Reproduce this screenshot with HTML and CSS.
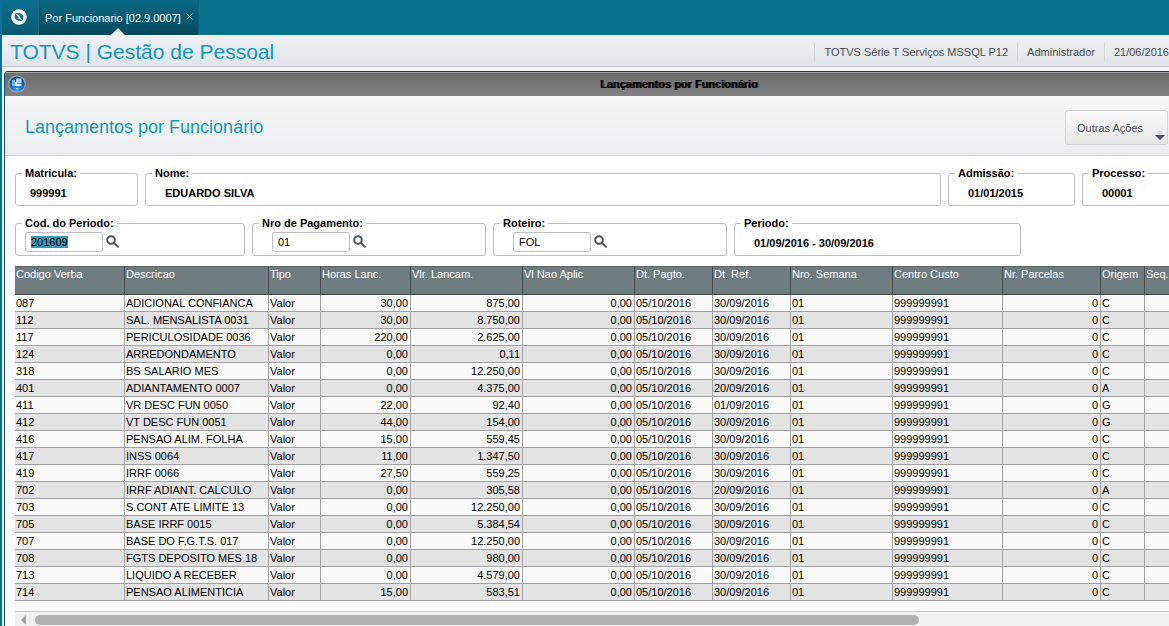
FILE: index.html
```html
<!DOCTYPE html>
<html lang="pt-BR">
<head>
    <meta charset="UTF-8">
    <meta name="viewport" content="width=device-width, initial-scale=1.0">
    <title>Lançamentos por Funcionário</title>
    <link rel="stylesheet" href="styles.css">
</head>

<body>

<nav class="tab-bar">
    <button class="home-button" aria-label="Início">
        <svg width="16" height="16" viewBox="0 0 16 16">
            <circle cx="8" cy="8" r="7.8" fill="#fff"/>
            <path d="M4 4.6 L8.6 4 L12.4 6.8 L12 11.4 L7.4 12 L3.6 9.2 Z" fill="#0a6c87"/>
            <path d="M4 4.6 L8.6 6.4 L8.9 8.6 L12 11.4 L7.4 9.6 L7.1 7.4 Z" fill="#fff"/>
        </svg>
    </button>
    <div class="tab">
        <span>Por Funcionario [02.9.0007]</span>
        <button class="tab-close" aria-label="Fechar">
            <svg width="7" height="7" viewBox="0 0 7 7"><path d="M.5 .5 L6.5 6.5 M6.5 .5 L.5 6.5" stroke="#a5c3cc" fill="none"/></svg>
        </button>
    </div>
</nav>

<header class="app-header">
    <h1>TOTVS | Gestão de Pessoal</h1>
    <ul class="session-info">
        <li>TOTVS Série T Serviços MSSQL P12</li>
        <li>Administrador</li>
        <li>21/06/2016</li>
    </ul>
</header>

<main class="window">
    <div class="window-title">
        <svg class="window-icon" width="18" height="18" viewBox="0 0 18 18">
            <defs>
                <radialGradient id="ball" cx="50%" cy="85%" r="80%">
                    <stop offset="0" stop-color="#3fa9ee"/>
                    <stop offset=".5" stop-color="#1769b8"/>
                    <stop offset="1" stop-color="#0d4f9c"/>
                </radialGradient>
            </defs>
            <circle cx="9" cy="9" r="8.8" fill="#9aa4ad"/>
            <circle cx="9" cy="9" r="7.6" fill="url(#ball)"/>
            <path d="M4 5h3v6H4z" fill="#6fb4ec"/>
            <path d="M8 3.5h5.5v5H8z" fill="#a9d5f6"/>
            <path d="M7 7h2v2h4.5v2H7z" fill="#e6f3fc"/>
            <path d="M7.5 13h3l-1.5 1.5z" fill="#9adcff"/>
        </svg>
        <span>Lançamentos por Funcionário</span>
    </div>

    <div class="page-header">
        <h2>Lançamentos por Funcionário</h2>
        <button class="actions-button">Outras Ações</button>
    </div>

    <form class="filters">
        <div class="field-row">
            <fieldset class="box box-matricula">
                <legend>Matricula:</legend>
                <div class="box-body">999991</div>
            </fieldset>
            <fieldset class="box box-nome">
                <legend>Nome:</legend>
                <div class="box-body">EDUARDO SILVA</div>
            </fieldset>
            <fieldset class="box box-admissao">
                <legend>Admissão:</legend>
                <div class="box-body">01/01/2015</div>
            </fieldset>
            <fieldset class="box box-processo">
                <legend>Processo:</legend>
                <div class="box-body">00001</div>
            </fieldset>
        </div>
        <div class="field-row">
            <fieldset class="box box-search box-periodo">
                <legend><label for="periodo">Cod. do Periodo:</label></legend>
                <div class="box-body">
                    <input id="periodo" type="text" value="201609">
                    <button type="button" class="search-button" aria-label="Pesquisar período">
                        <svg width="14" height="14" viewBox="0 0 14 14"><circle cx="5" cy="5" r="3.8"/><path d="M7.8 7.8 L12.6 12.4"/></svg>
                    </button>
                </div>
            </fieldset>
            <fieldset class="box box-search">
                <legend><label for="pagamento">Nro de Pagamento:</label></legend>
                <div class="box-body">
                    <input id="pagamento" type="text" value="01">
                    <button type="button" class="search-button" aria-label="Pesquisar pagamento">
                        <svg width="14" height="14" viewBox="0 0 14 14"><circle cx="5" cy="5" r="3.8"/><path d="M7.8 7.8 L12.6 12.4"/></svg>
                    </button>
                </div>
            </fieldset>
            <fieldset class="box box-search">
                <legend><label for="roteiro">Roteiro:</label></legend>
                <div class="box-body">
                    <input id="roteiro" type="text" value="FOL">
                    <button type="button" class="search-button" aria-label="Pesquisar roteiro">
                        <svg width="14" height="14" viewBox="0 0 14 14"><circle cx="5" cy="5" r="3.8"/><path d="M7.8 7.8 L12.6 12.4"/></svg>
                    </button>
                </div>
            </fieldset>
            <fieldset class="box box-datas">
                <legend>Periodo:</legend>
                <div class="box-body">01/09/2016 - 30/09/2016</div>
            </fieldset>
        </div>
    </form>

    <div class="grid">
        <table>
            <colgroup>
                <col class="col-codigo">
                <col class="col-descricao">
                <col class="col-tipo">
                <col class="col-horas">
                <col class="col-valor">
                <col class="col-valor">
                <col class="col-data">
                <col class="col-data">
                <col class="col-semana">
                <col class="col-centro">
                <col class="col-parcelas">
                <col class="col-origem">
                <col>
            </colgroup>
            <thead>
                <tr>
                    <th>Codigo Verba</th>
                    <th>Descricao</th>
                    <th>Tipo</th>
                    <th>Horas Lanc.</th>
                    <th>Vlr. Lancam.</th>
                    <th>Vl Nao Aplic</th>
                    <th>Dt. Pagto.</th>
                    <th>Dt. Ref.</th>
                    <th>Nro. Semana</th>
                    <th>Centro Custo</th>
                    <th>Nr. Parcelas</th>
                    <th>Origem</th>
                    <th>Seq.</th>
                </tr>
            </thead>
            <tbody id="entries"></tbody>
        </table>
    </div>

    <div class="scrollbar">
        <span class="scroll-arrow"></span>
        <span class="scroll-thumb"></span>
    </div>
</main>

<script>
    // codigo, descricao, horas, valor, data de referencia, origem
    const entries = [
        ["087", "ADICIONAL CONFIANCA", "30,00", "875,00", "30/09/2016", "C"],
        ["112", "SAL. MENSALISTA 0031", "30,00", "8.750,00", "30/09/2016", "C"],
        ["117", "PERICULOSIDADE 0036", "220,00", "2.625,00", "30/09/2016", "C"],
        ["124", "ARREDONDAMENTO", "0,00", "0,11", "30/09/2016", "C"],
        ["318", "BS SALARIO MES", "0,00", "12.250,00", "30/09/2016", "C"],
        ["401", "ADIANTAMENTO 0007", "0,00", "4.375,00", "20/09/2016", "A"],
        ["411", "VR DESC FUN 0050", "22,00", "92,40", "01/09/2016", "G"],
        ["412", "VT DESC FUN 0051", "44,00", "154,00", "30/09/2016", "G"],
        ["416", "PENSAO ALIM. FOLHA", "15,00", "559,45", "30/09/2016", "C"],
        ["417", "INSS 0064", "11,00", "1.347,50", "30/09/2016", "C"],
        ["419", "IRRF 0066", "27,50", "559,25", "30/09/2016", "C"],
        ["702", "IRRF ADIANT. CALCULO", "0,00", "305,58", "20/09/2016", "A"],
        ["703", "S.CONT ATE LIMITE 13", "0,00", "12.250,00", "30/09/2016", "C"],
        ["705", "BASE IRRF 0015", "0,00", "5.384,54", "30/09/2016", "C"],
        ["707", "BASE DO F.G.T.S. 017", "0,00", "12.250,00", "30/09/2016", "C"],
        ["708", "FGTS DEPOSITO MES 18", "0,00", "980,00", "30/09/2016", "C"],
        ["713", "LIQUIDO A RECEBER", "0,00", "4.579,00", "30/09/2016", "C"],
        ["714", "PENSAO ALIMENTICIA", "15,00", "583,51", "30/09/2016", "C"]
    ];

    document.getElementById("entries").innerHTML = entries.map(([codigo, descricao, horas, valor, ref, origem]) => `
        <tr>
            <td>${codigo}</td>
            <td>${descricao}</td>
            <td>Valor</td>
            <td class="number">${horas}</td>
            <td class="number">${valor}</td>
            <td class="number">0,00</td>
            <td>05/10/2016</td>
            <td>${ref}</td>
            <td>01</td>
            <td>999999991</td>
            <td class="number">0</td>
            <td>${origem}</td>
            <td></td>
        </tr>`).join("");

    const periodo = document.getElementById("periodo");
    periodo.focus();
    periodo.select();
</script>

</body>
</html>
```
FILE: styles.css
```css
* {
    box-sizing: border-box;
}

body {
    margin: 0;
    height: 100vh;
    overflow: hidden;
    display: flex;
    flex-direction: column;
    border-left: 2px solid #0a718e;
    background-color: #f4f5f7;
    font-family: "Liberation Sans", Arial, sans-serif;
    font-size: 11px;
    color: #000;
}

button {
    font-family: inherit;
    font-size: inherit;
    cursor: pointer;
}

/* Top tabs */
.tab-bar {
    flex: none;
    display: flex;
    height: 35px;
    background-color: #0a718e;
}

.home-button {
    width: 37px;
    padding: 0 2px 1px 0;
    border: none;
    border-right: 1px solid #2a6877;
    background: linear-gradient(#0a718e, #075b73);
    display: flex;
    align-items: center;
    justify-content: center;
}

.tab {
    position: relative;
    display: flex;
    align-items: center;
    gap: 5px;
    padding: 0 5px 0 6px;
    background: linear-gradient(#096a85, #06495b);
    border-right: 1px solid #0a6680;
    color: white;
}

.tab::after {
    content: "";
    position: absolute;
    bottom: 0;
    left: 50%;
    margin-left: -7px;
    border: 7px solid transparent;
    border-top: none;
    border-bottom-color: #eef0f4;
}

.tab-close {
    display: flex;
    padding: 0 0 2px;
    border: none;
    background: none;
}

/* Application header */
.app-header {
    flex: none;
    display: flex;
    align-items: center;
    justify-content: space-between;
    height: 32px;
    padding: 2px 0 0 8px;
    background: linear-gradient(#eef0f4, #e0e5ea);
    border-bottom: 1px solid #bfc5cb;
}

.app-header h1 {
    margin: 0;
    font-size: 21px;
    font-weight: normal;
    color: #0c9abe;
    white-space: nowrap;
}

.session-info {
    display: flex;
    margin: 0;
    padding: 0;
    list-style: none;
    color: #4a4a4a;
    white-space: nowrap;
}

.session-info li {
    padding: 0 9px;
    line-height: 18px;
    border-left: 1px solid #d5d9dc;
}

.session-info li:last-child {
    padding-right: 0;
}

/* Window */
.window {
    flex: 1;
    min-height: 0;
    display: flex;
    flex-direction: column;
    margin: 4px 0 0 2px;
    border-left: 1px solid #14507c;
    border-top: 1px solid #333;
    border-top-left-radius: 4px;
    background-color: white;
    overflow: hidden;
}

.window-title {
    flex: none;
    display: flex;
    align-items: center;
    height: 24px;
    padding: 0 0 2px 3px;
    border-top: 1px solid #a5a5a5;
    background: linear-gradient(#6d6d6d, #828282);
}

.window-title span {
    flex: 1;
    padding-left: 14%;
    text-align: center;
    font-weight: bold;
    text-shadow: 1px 0 0 #222;
}

.page-header {
    flex: none;
    display: flex;
    align-items: center;
    justify-content: space-between;
    height: 60px;
    padding: 4px 1px 0 20px;
    background: linear-gradient(#f5f7f6, #ebecee);
    border-bottom: 1px solid #d6d6d6;
}

.page-header h2 {
    margin: 0;
    font-size: 18px;
    font-weight: normal;
    color: #0c9abe;
}

.actions-button {
    position: relative;
    width: 103px;
    height: 35px;
    padding: 0 11px;
    border: 1px solid #d3d3d3;
    border-radius: 3px;
    background: linear-gradient(#fafafa, #e6e6e6);
    text-align: left;
    color: #4c4c55;
}

.actions-button::after {
    content: "";
    position: absolute;
    right: 2px;
    bottom: 4px;
    border: 5px solid transparent;
    border-top-color: #4c4c5a;
    border-bottom: none;
}

/* Filters */
.filters {
    flex: none;
    display: flex;
    flex-direction: column;
    gap: 11px;
    padding: 11px 0 10px 10px;
}

.field-row {
    display: flex;
    gap: 7px;
}

.box {
    min-width: 0;
    margin: 0;
    padding: 0 0 0 6px;
    border: 1px solid #bfbfbf;
    border-radius: 3px;
    font-weight: bold;
}

.box legend {
    padding: 0 3px;
    line-height: 12px;
    white-space: nowrap;
}

.box-body {
    display: flex;
    align-items: center;
    gap: 3px;
    height: 26px;
    padding: 2px 0 0 13px;
    white-space: nowrap;
}

.box-search .box-body {
    padding-top: 0;
}

.box-matricula {
    width: 123px;
}

.box-matricula .box-body {
    padding-left: 8px;
}

.box-nome {
    flex: 1;
}

.box-admissao {
    width: 127px;
}

.box-processo {
    width: 87px;
    border-right: none;
    border-top-right-radius: 0;
    border-bottom-right-radius: 0;
}

.box-search {
    width: 234px;
}

.box-search.box-periodo {
    width: 230px;
}

.box-periodo .box-body {
    padding-left: 3px;
}

.box-datas {
    width: 287px;
}

.box input {
    width: 78px;
    height: 20px;
    padding: 0 5px;
    border: 1px solid #bfbfbf;
    border-radius: 3px;
    outline: none;
    font-family: inherit;
    font-size: 11px;
    color: #000;
}

.box input::selection {
    background-color: #3399b5;
    color: #000;
}

.search-button {
    display: flex;
    padding: 0;
    border: none;
    background: none;
}

.search-button svg {
    fill: none;
    stroke: #4a5568;
    stroke-width: 2;
}

/* Grid */
.grid {
    flex: 1;
    min-height: 0;
    margin-left: 10px;
    background-color: #fafafa;
    overflow: hidden;
}

table {
    width: 100%;
    table-layout: fixed;
    border-collapse: separate;
    border-spacing: 0;
}

.col-codigo { width: 110px; }
.col-descricao { width: 144px; }
.col-tipo { width: 52px; }
.col-horas { width: 90px; }
.col-valor { width: 112px; }
.col-data { width: 78px; }
.col-semana { width: 102px; }
.col-centro { width: 110px; }
.col-parcelas { width: 98px; }
.col-origem { width: 44px; }

th,
td {
    padding: 0 1px;
    border-right: 1px solid #a0a0a0;
    border-bottom: 1px solid #a0a0a0;
    text-align: left;
    white-space: nowrap;
    overflow: hidden;
}

th {
    height: 29px;
    padding-top: 1px;
    vertical-align: top;
    background-color: #6e7c80;
    border-top: 1px solid #5c676a;
    border-right-color: #44494c;
    border-bottom-color: #44494c;
    font-weight: normal;
    color: white;
}

td {
    height: 17px;
    line-height: 16px;
    background-color: #fafafa;
}

tr:nth-child(even) td {
    background-color: #e3e3e3;
}

th:last-child,
td:last-child {
    border-right: none;
}

td.number {
    padding-right: 2px;
    text-align: right;
}

/* Horizontal scrollbar */
.scrollbar {
    flex: none;
    display: flex;
    align-items: center;
    gap: 9px;
    height: 15px;
    margin-left: 10px;
    padding: 2px 0 0 6px;
    border-top: 1px solid #c8c8c8;
    background-color: #f1f1f1;
}

.scroll-arrow {
    border: 5px solid transparent;
    border-left: none;
    border-right-color: #a0a0a0;
}

.scroll-thumb {
    width: 77%;
    height: 10px;
    border-radius: 5px;
    background-color: #b0b0b0;
}
```
